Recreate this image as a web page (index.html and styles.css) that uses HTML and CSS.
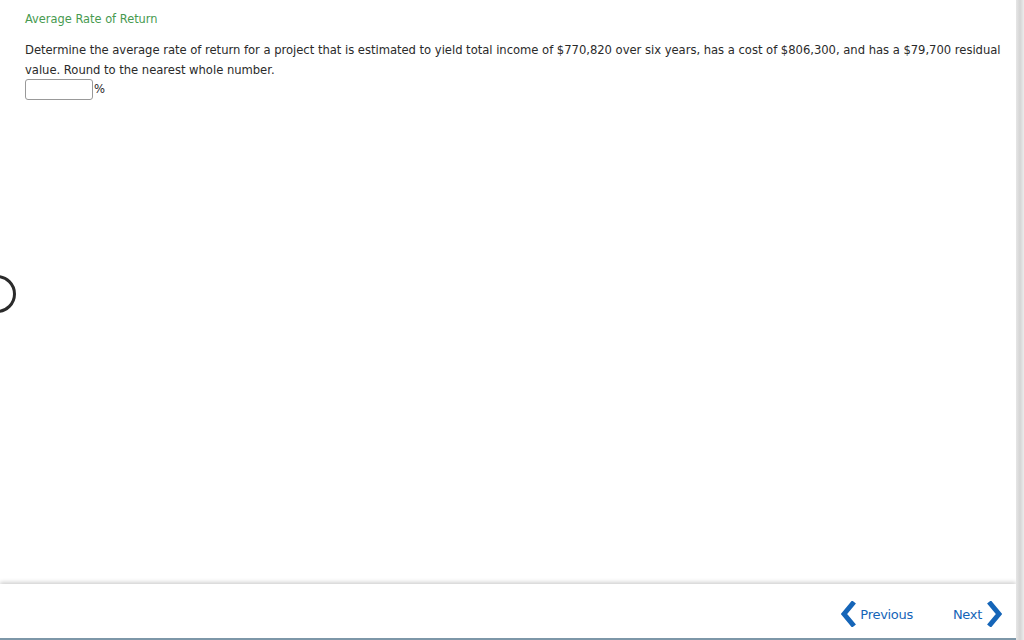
FILE: index.html
```html
<!DOCTYPE html>
<html>
<head>
<meta charset="utf-8">
<link rel="stylesheet" href="styles.css">
</head>
<body>
<div class="page">
  <main class="content">
    <div class="title">Average Rate of Return</div>
    <p class="question">Determine the average rate of return for a project that is estimated to yield total income of $770,820 over six years, has a cost of $806,300, and has a $79,700 residual value. Round to the nearest whole number.</p>
    <div class="answer"><span class="box"></span><span class="pct">%</span></div>
    <div class="spinner"></div>
  </main>
  <footer class="footer">
    <a class="nav prev"><svg width="16" height="26" viewBox="0 0 16 26"><path d="M13 1 L3 13 L13 25" fill="none" stroke="#1565b8" stroke-width="5" stroke-linejoin="miter"/></svg><span>Previous</span></a>
    <a class="nav next"><span>Next</span><svg width="16" height="26" viewBox="0 0 16 26"><path d="M3 1 L13 13 L3 25" fill="none" stroke="#1565b8" stroke-width="5" stroke-linejoin="miter"/></svg></a>
  </footer>
  <div class="scroll"></div>
</div>
</body>
</html>
```
FILE: styles.css
```css
html, body { margin: 0; padding: 0; background: #fff; }
body { font-family: "DejaVu Sans", Verdana, sans-serif; color: #2a2a2a; width: 1024px; height: 640px; overflow: hidden; }
.page { position: relative; width: 1024px; height: 640px; display: flex; flex-direction: column; }
.content { flex: 1; padding: 11px 20px 0 25px; position: relative; }
.title { color: #479a50; font-size: 11.4px; line-height: 16px; }
.question { margin: 13px 0 0; font-size: 11.6px; letter-spacing: -0.03px; line-height: 20px; width: 985px; }
.answer { display: flex; align-items: center; margin-top: -2px; height: 22px; }
.box { width: 66px; height: 19px; border: 1px solid #999; border-radius: 3px; background: #fff; box-sizing: content-box; }
.pct { font-size: 11.6px; margin-left: 1px; }
.spinner { position: absolute; left: -22px; top: 275px; width: 38px; height: 38px; border: 3px solid #2b2b2b; border-radius: 50%; box-sizing: border-box; }
.footer { height: 54px; border-bottom: 2px solid #7d97a8; box-shadow: 0 -2px 4px rgba(0,0,0,0.18); margin-right: 8px; display: flex; justify-content: flex-end; align-items: center; padding-right: 14px; gap: 40px; position: relative; }
.nav { display: flex; align-items: center; gap: 5px; color: #1565b8; font-size: 13px; font-family: "DejaVu Sans", Verdana, sans-serif; letter-spacing: -0.3px; margin-top: 6px; }
.prev { gap: 3px; }
.next { gap: 4px; }
.scroll { position: absolute; right: 0; top: 0; width: 8px; height: 640px; background: linear-gradient(to right, #e6e6e6, #d4d4d4 50%, #ececec); }
```
